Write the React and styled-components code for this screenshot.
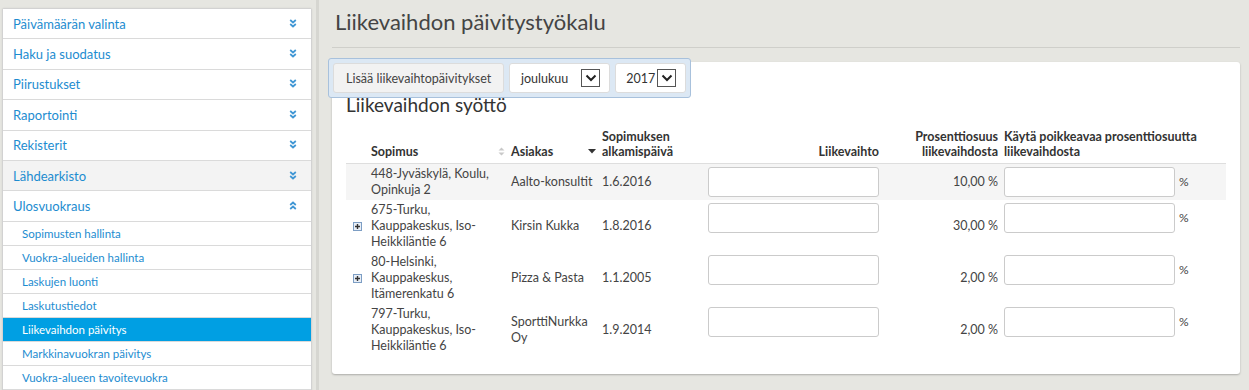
import React from 'react'
import styled, { createGlobalStyle } from 'styled-components'

const GlobalStyle = createGlobalStyle`
  html, body {
    margin: 0;
    padding: 0;
    background: #e6e6e1;
    font-family: Lato, "Open Sans", sans-serif;
    color: #444;
  }
`

const menu = [
  { title: 'Päivämäärän valinta' },
  { title: 'Haku ja suodatus' },
  { title: 'Piirustukset' },
  { title: 'Raportointi' },
  { title: 'Rekisterit' },
  { title: 'Lähdearkisto', hover: true },
  { title: 'Ulosvuokraus', open: true },
]

const subMenu = [
  'Sopimusten hallinta',
  'Vuokra-alueiden hallinta',
  'Laskujen luonti',
  'Laskutustiedot',
  'Liikevaihdon päivitys',
  'Markkinavuokran päivitys',
  'Vuokra-alueen tavoitevuokra',
]

const rows = [
  { contract: ['448-Jyväskylä, Koulu,', 'Opinkuja 2'], client: 'Aalto-konsultit', start: '1.6.2016', pct: '10,00 %', hover: true },
  { contract: ['675-Turku,', 'Kauppakeskus, Iso-', 'Heikkiläntie 6'], client: 'Kirsin Kukka', start: '1.8.2016', pct: '30,00 %', expand: true },
  { contract: ['80-Helsinki,', 'Kauppakeskus,', 'Itämerenkatu 6'], client: 'Pizza & Pasta', start: '1.1.2005', pct: '2,00 %', expand: true },
  { contract: ['797-Turku,', 'Kauppakeskus, Iso-', 'Heikkiläntie 6'], client: 'SporttiNurkka Oy', start: '1.9.2014', pct: '2,00 %' },
]

const Chevrons = ({ up }) => (
  <svg width="8" height="9" viewBox="0 0 8 9">
    <g fill="none" stroke="#3f96d4" strokeWidth="1.7" transform={up ? 'rotate(180 4 4.5)' : undefined}>
      <polyline points="1.2,1 4,3.5 6.8,1" />
      <polyline points="1.2,5 4,7.5 6.8,5" />
    </g>
  </svg>
)

const SelectArrow = () => (
  <ArrowBox>
    <svg width="12" height="8" viewBox="0 0 12 8">
      <polyline points="1.5,1.5 6,6 10.5,1.5" fill="none" stroke="#222" strokeWidth="2" />
    </svg>
  </ArrowBox>
)

const Expander = () => (
  <svg width="9" height="9" viewBox="0 0 9 9">
    <rect x="0.5" y="0.5" width="8" height="8" fill="#e8eef6" stroke="#7d9ec4" />
    <path d="M2 4.5h5M4.5 2v5" stroke="#333" strokeWidth="1.4" />
  </svg>
)

const SortBoth = () => (
  <svg width="7" height="9" viewBox="0 0 7 9">
    <path d="M0.5 3.6L3.5 0.5L6.5 3.6Z M0.5 5.4L3.5 8.5L6.5 5.4Z" fill="#c9c9c9" />
  </svg>
)

const SortDown = () => (
  <svg width="8" height="5" viewBox="0 0 8 5">
    <path d="M0 0L8 0L4 4.5Z" fill="#333" />
  </svg>
)

const App = () => {
  return (
    <>
      <GlobalStyle />
      <Page>
        <Sidebar>
          <Panel>
            {menu.map(({ title, hover, open }) => (
              <MenuItem key={title} $hover={hover}>
                <span>{title}</span>
                <Chevrons up={open} />
              </MenuItem>
            ))}
            {subMenu.map((title) => (
              <SubItem key={title} $active={title === 'Liikevaihdon päivitys'}>
                {title}
              </SubItem>
            ))}
          </Panel>
        </Sidebar>
        <Main>
          <Title>Liikevaihdon päivitystyökalu</Title>
          <Card>
            <Toolbar>
              <ToolButton>Lisää liikevaihtopäivitykset</ToolButton>
              <SelectBox $width={101} $gap={13}>
                <span>joulukuu</span>
                <SelectArrow />
              </SelectBox>
              <SelectBox $width={71} $gap={2}>
                <span>2017</span>
                <SelectArrow />
              </SelectBox>
            </Toolbar>
            <CardTitle>Liikevaihdon syöttö</CardTitle>
            <Table>
              <colgroup>
                <col style={{ width: 22 }} />
                <col style={{ width: 140 }} />
                <col style={{ width: 91 }} />
                <col style={{ width: 103 }} />
                <col style={{ width: 180 }} />
                <col style={{ width: 119 }} />
                <col style={{ width: 225 }} />
              </colgroup>
              <thead>
                <tr>
                  <Th />
                  <Th>
                    <SortHead>
                      <span>Sopimus</span>
                      <SortBoth />
                    </SortHead>
                  </Th>
                  <Th>
                    <SortHead>
                      <span>Asiakas</span>
                      <SortDown />
                    </SortHead>
                  </Th>
                  <Th>Sopimuksen<br />alkamispäivä</Th>
                  <Th $right>Liikevaihto</Th>
                  <Th $right>Prosenttiosuus<br />liikevaihdosta</Th>
                  <Th>Käytä poikkeavaa prosenttiosuutta<br />liikevaihdosta</Th>
                </tr>
              </thead>
              <tbody>
                {rows.map((row, i) => (
                  <Row key={i} $hover={row.hover}>
                    <Td $center>{row.expand && <Expander />}</Td>
                    <Td>
                      {row.contract.map((line, j) => (
                        <div key={j}>{line}</div>
                      ))}
                    </Td>
                    <Td>{row.client}</Td>
                    <Td>{row.start}</Td>
                    <Td $top>
                      <InputLine $end>
                        <Input />
                      </InputLine>
                    </Td>
                    <Td $right>{row.pct}</Td>
                    <Td $top>
                      <InputLine>
                        <Input />
                        <Unit>%</Unit>
                      </InputLine>
                    </Td>
                  </Row>
                ))}
              </tbody>
            </Table>
          </Card>
        </Main>
      </Page>
    </>
  )
}

const Page = styled.div`
  display: flex;
  min-height: 390px;
`

const Sidebar = styled.div`
  width: 319px;
  flex-shrink: 0;
  padding: 8px 0 0 2px;
  box-sizing: border-box;
  border-right: 3px solid #d6d6d1;
`

const Panel = styled.div`
  width: 308px;
  background: #fff;
  border: 1px solid #d2d2d2;
  border-radius: 2px 2px 0 0;
  box-shadow: 0 0 2px rgba(0, 0, 0, 0.08);
`

const MenuItem = styled.div`
  display: flex;
  align-items: center;
  justify-content: space-between;
  height: 29.4px;
  padding: 0 14px 0 10px;
  font-size: 13px;
  color: #1d8cd0;
  background: ${(p) => (p.$hover ? '#f3f3f3' : '#fff')};
  border-bottom: 1px solid #dadada;
  svg {
    margin-top: -1px;
  }
`

const SubItem = styled.div`
  display: flex;
  align-items: center;
  height: 23px;
  padding: 0 19px;
  font-size: 11.5px;
  color: ${(p) => (p.$active ? '#fff' : '#1d8cd0')};
  background: ${(p) => (p.$active ? '#009fe3' : '#fff')};
  border-bottom: 1px solid #dadada;
`

const Main = styled.div`
  flex: 1;
  padding: 0 9px 0 13px;
`

const Title = styled.h1`
  margin: 0;
  height: 48px;
  padding: 8px 0 0 3px;
  box-sizing: border-box;
  font-size: 22px;
  font-weight: 400;
  color: #444;
  border-bottom: 1px solid #cfcfca;
`

const Card = styled.div`
  position: relative;
  margin-top: 14px;
  height: 312px;
  box-sizing: border-box;
  background: #fff;
  border-radius: 3px;
  box-shadow: 0 1px 2px rgba(0, 0, 0, 0.25);
  padding: 32px 12px 0 14px;
`

const Toolbar = styled.div`
  position: absolute;
  top: -4px;
  left: -4px;
  display: flex;
  gap: 5px;
  padding: 4px;
  background: #dce8f4;
  border: 1px solid #a8c1dc;
  border-radius: 3px;
`

const ToolButton = styled.div`
  display: flex;
  align-items: center;
  height: 30px;
  box-sizing: border-box;
  padding: 0 12px;
  font-size: 12.5px;
  color: #444;
  background: #f2f2f2;
  border: 1px solid #dcdcdc;
  border-radius: 3px;
`

const SelectBox = styled.div`
  display: flex;
  align-items: center;
  justify-content: flex-end;
  gap: ${(p) => p.$gap}px;
  width: ${(p) => p.$width}px;
  height: 30px;
  padding-right: 9px;
  font-size: 12.5px;
  color: #333;
  background: #fff;
  border: 1px solid #dcdcdc;
  border-radius: 3px;
  box-sizing: border-box;
`

const ArrowBox = styled.div`
  display: flex;
  align-items: center;
  justify-content: center;
  width: 17px;
  height: 16px;
  border: 1px solid #555;
  background: #fff;
`

const CardTitle = styled.h2`
  margin: 0 0 12px;
  font-size: 19px;
  font-weight: 400;
  color: #333;
  line-height: 22px;
`

const Table = styled.table`
  width: 880px;
  table-layout: fixed;
  border-collapse: collapse;
  font-size: 12.5px;
  color: #444;
`

const Th = styled.th`
  padding: 1px 3px 4px;
  vertical-align: bottom;
  text-align: ${(p) => (p.$right ? 'right' : 'left')};
  font-weight: 700;
  line-height: 15px;
  color: #333;
  border-bottom: 1px solid #dedede;
`

const SortHead = styled.div`
  display: flex;
  align-items: center;
  justify-content: space-between;
  svg {
    margin-bottom: 1px;
  }
`

const Row = styled.tr`
  background: ${(p) => (p.$hover ? '#f5f5f5' : '#fff')};
`

const Td = styled.td`
  padding: 2px 3px;
  line-height: 16px;
  vertical-align: ${(p) => (p.$top ? 'top' : 'middle')};
  text-align: ${(p) => (p.$right ? 'right' : p.$center ? 'center' : 'left')};
  svg {
    display: block;
    margin: 0 auto;
  }
`

const InputLine = styled.div`
  display: flex;
  align-items: center;
  justify-content: ${(p) => (p.$end ? 'flex-end' : 'flex-start')};
  gap: 4px;
`

const Input = styled.input`
  display: block;
  width: 171px;
  height: 30px;
  box-sizing: border-box;
  margin: 1px 0 0;
  border: 1px solid #cbcbcb;
  border-radius: 3px;
  background: #fff;
`

const Unit = styled.span`
  font-size: 12px;
  color: #444;
`

export default App
